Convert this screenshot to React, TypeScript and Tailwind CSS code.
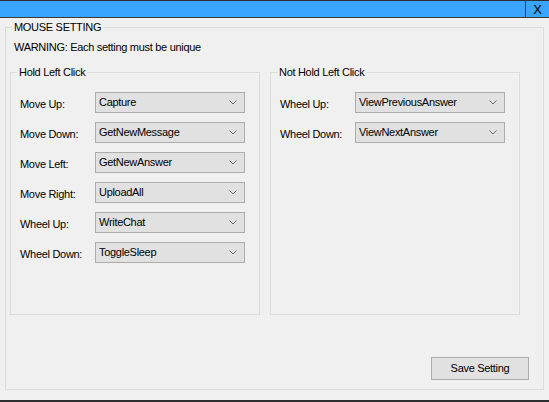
const holdRows = [
  { label: "Move Up:", value: "Capture" },
  { label: "Move Down:", value: "GetNewMessage" },
  { label: "Move Left:", value: "GetNewAnswer" },
  { label: "Move Right:", value: "UploadAll" },
  { label: "Wheel Up:", value: "WriteChat" },
  { label: "Wheel Down:", value: "ToggleSleep" },
];

const notHoldRows = [
  { label: "Wheel Up:", value: "ViewPreviousAnswer" },
  { label: "Wheel Down:", value: "ViewNextAnswer" },
];

const Combo = ({ value }: { value: string }) => (
  <div className="w-[150px] h-[21px] bg-[#e1e1e1] border border-[#adadad] flex items-center justify-between pl-[3px] pr-[7px]">
    <span className="leading-[19px]">{value}</span>
    <svg width="8" height="5" viewBox="0 0 8 5" className="text-[#6b6b6b]">
      <path d="M0.5 0.5 L4 4 L7.5 0.5" fill="none" stroke="currentColor" strokeWidth="1" />
    </svg>
  </div>
);

const Group = ({ title, rows }: { title: string; rows: { label: string; value: string }[] }) => (
  <fieldset className="w-[250px] h-[250px] border border-[#dcdcdc]">
    <legend className="ml-[6px] px-[2px] leading-[15px]">{title}</legend>
    <div className="flex flex-col gap-[9px] pl-[9px] pt-[12px]">
      {rows.map((r) => (
        <div key={r.label + r.value} className="flex items-center">
          <span className="w-[75px] pt-[3px] leading-[18px]">{r.label}</span>
          <Combo value={r.value} />
        </div>
      ))}
    </div>
  </fieldset>
);

export default function App() {
  return (
    <div
      className="w-[549px] h-[402px] bg-[#f0f0f0] text-black text-[11px] tracking-[-0.3px] flex flex-col border-t border-b-2 border-[#2e2e31]"
      style={{ fontFamily: '"Liberation Sans", Arial, sans-serif' }}
    >
      <div className="h-[17px] bg-[#39a5ff] border-b border-[#3a3a3a] flex justify-end shrink-0">
        <div className="w-[24px] border-l border-[#3a3a3a] flex items-center justify-center text-[13px] leading-none tracking-normal">
          X
        </div>
      </div>
      <fieldset className="ml-[5px] mt-[2px] w-[539px] h-[370px] border border-[#dcdcdc]">
        <legend className="ml-[6px] px-[2px] leading-[15px]">MOUSE SETTING</legend>
        <div className="pl-[4px]">
          <p className="pl-[4px] mt-[5px] leading-[15px]">WARNING: Each setting must be unique</p>
          <div className="flex gap-[10px] mt-[10px]">
            <Group title="Hold Left Click" rows={holdRows} />
            <Group title="Not Hold Left Click" rows={notHoldRows} />
          </div>
          <div className="flex justify-end pr-[14px] mt-[42px]">
            <button className="w-[98px] h-[23px] bg-[#e1e1e1] border border-[#adadad] text-[11px] tracking-[-0.3px]">
              Save Setting
            </button>
          </div>
        </div>
      </fieldset>
    </div>
  );
}
